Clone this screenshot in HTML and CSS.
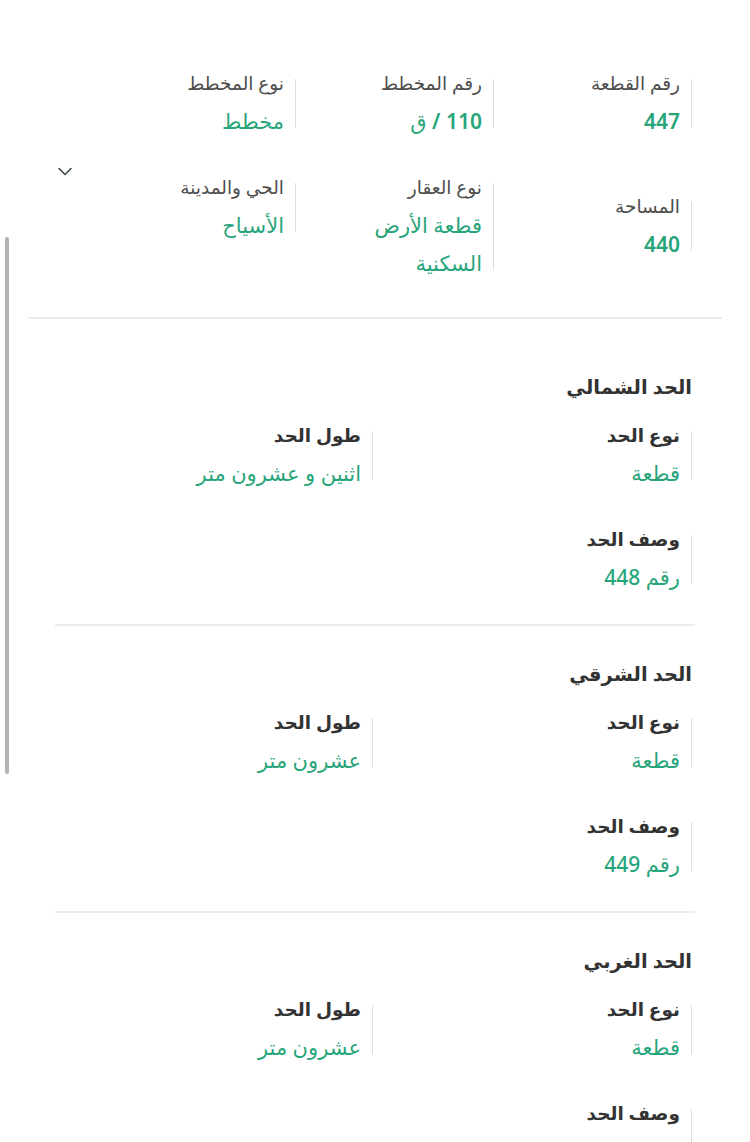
FILE: index.html
```html
<!DOCTYPE html>
<html lang="ar" dir="rtl">
<head>
<meta charset="utf-8">
<title>بيانات القطعة</title>
<link rel="stylesheet" href="styles.css">
</head>
<body>
<div class="scroll-thumb"></div>

<section class="summary">
  <div class="field">
    <div class="field-label">رقم القطعة</div>
    <div class="field-value"><span class="num">447</span></div>
  </div>
  <div class="field">
    <div class="field-label">رقم المخطط</div>
    <div class="field-value"><span class="num">110 /</span> ق</div>
  </div>
  <div class="field">
    <div class="field-label">نوع المخطط</div>
    <div class="field-value">مخطط</div>
  </div>
  <div class="spacer"></div>

  <div class="field field-centered">
    <div class="field-label">المساحة</div>
    <div class="field-value"><span class="num">440</span></div>
  </div>
  <div class="field">
    <div class="field-label">نوع العقار</div>
    <div class="field-value">قطعة الأرض<br>السكنية</div>
  </div>
  <div class="field">
    <div class="field-label">الحي والمدينة</div>
    <div class="field-value">الأسياح</div>
  </div>
  <button class="toggle" type="button" aria-label="عرض المزيد">
    <svg width="16" height="12" viewBox="0 0 16 12"><path d="M2 3.5 L8 9.5 L14 3.5" fill="none" stroke="#3d4a4a" stroke-width="1.6" stroke-linecap="round" stroke-linejoin="round"/></svg>
  </button>
</section>

<hr class="rule">

<div class="boundaries">
  <section class="boundary boundary-first">
    <h2 class="boundary-title">الحد الشمالي</h2>
    <div class="boundary-grid">
      <div class="field">
        <div class="field-label">نوع الحد</div>
        <div class="field-value">قطعة</div>
      </div>
      <div class="field">
        <div class="field-label">طول الحد</div>
        <div class="field-value">اثنين و عشرون متر</div>
      </div>
      <div class="field">
        <div class="field-label">وصف الحد</div>
        <div class="field-value">رقم 448</div>
      </div>
    </div>
  </section>

  <section class="boundary">
    <h2 class="boundary-title">الحد الشرقي</h2>
    <div class="boundary-grid">
      <div class="field">
        <div class="field-label">نوع الحد</div>
        <div class="field-value">قطعة</div>
      </div>
      <div class="field">
        <div class="field-label">طول الحد</div>
        <div class="field-value">عشرون متر</div>
      </div>
      <div class="field">
        <div class="field-label">وصف الحد</div>
        <div class="field-value">رقم 449</div>
      </div>
    </div>
  </section>

  <section class="boundary">
    <h2 class="boundary-title">الحد الغربي</h2>
    <div class="boundary-grid">
      <div class="field">
        <div class="field-label">نوع الحد</div>
        <div class="field-value">قطعة</div>
      </div>
      <div class="field">
        <div class="field-label">طول الحد</div>
        <div class="field-value">عشرون متر</div>
      </div>
      <div class="field">
        <div class="field-label">وصف الحد</div>
        <div class="field-value">&nbsp;</div>
      </div>
    </div>
  </section>
</div>
</body>
</html>
```

FILE: styles.css
```css
html, body {
  margin: 0;
  padding: 0;
  background: #ffffff;
}

body {
  font-family: "Noto Sans", "DejaVu Sans", sans-serif;
  color: #333;
  overflow: hidden;
}

/* overlay scrollbar thumb on the left edge */
.scroll-thumb {
  position: absolute;
  left: 5px;
  top: 237px;
  width: 4px;
  height: 537px;
  border-radius: 2px;
  background: #b3b3b3;
}

/* ---------- key/value field ---------- */
.field {
  position: relative;
  padding-right: 12px;
}

.field::after {
  content: "";
  position: absolute;
  right: 0;
  top: 6px;
  bottom: 12px;
  width: 1px;
  background: #dedede;
}

.field-label {
  font-size: 18.5px;
  line-height: 20px;
  color: #4d4d4d;
  margin-bottom: 9px;
}

.field-value {
  font-size: 21px;
  line-height: 38px;
  color: #27a57a;
  font-weight: 500;
}

.num {
  font-weight: 600;
}

/* ---------- summary grid ---------- */
.summary {
  display: grid;
  grid-template-columns: 198px 198px 198px 1fr;
  row-gap: 37px;
  align-items: start;
  padding: 73px 58px 0 57px;
}

.field-centered {
  align-self: center;
}

.toggle {
  justify-self: end;
  align-self: start;
  margin-top: -12px;
  width: 16px;
  height: 12px;
  padding: 0;
  border: 0;
  background: none;
  display: block;
}

.toggle svg {
  display: block;
}

.rule {
  margin: 35px 28px 0;
  border: 0;
  height: 2px;
  background: #ececec;
}

/* ---------- boundaries ---------- */
.boundaries {
  margin: 0 55px;
}

.boundary {
  padding: 33px 3px 28px 0;
  border-bottom: 2px solid #ececec;
}

.boundary-first {
  padding-top: 53px;
}

.boundary-title {
  margin: 0 0 23px;
  font-size: 19.5px;
  line-height: 30px;
  font-weight: 700;
  color: #333;
}

.boundary-grid {
  display: grid;
  grid-template-columns: 319px 1fr;
  row-gap: 37px;
  align-items: start;
}

.boundary-grid .field-label {
  font-weight: 600;
  color: #333;
}
```
